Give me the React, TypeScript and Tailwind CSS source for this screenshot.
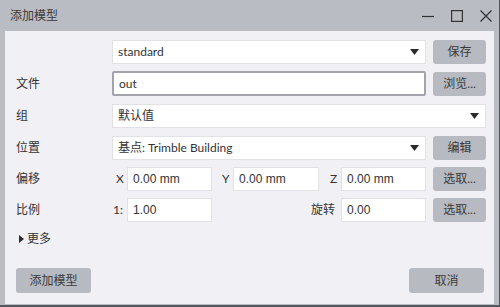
import React from "react"

const font = { fontFamily: 'Lato, "Noto Sans CJK SC", sans-serif' }
const fieldFont = { fontFamily: '"Liberation Sans", "Noto Sans CJK SC", sans-serif' }

function Arrow() {
  return (
    <svg width="9" height="6" viewBox="0 0 9 6" className="shrink-0">
      <path d="M0 0 L9 0 L4.5 6 Z" fill="#2b2b2b" />
    </svg>
  )
}

function Select({ value, className }: { value: string; className: string }) {
  return (
    <div className={`h-6 bg-white border border-[#e2e2e6] flex items-center justify-between pl-[5px] pr-[6px] ${className}`}>
      <span>{value}</span>
      <Arrow />
    </div>
  )
}

function Btn({ children, className = "w-[53px]" }: { children: React.ReactNode; className?: string }) {
  return (
    <button className={`h-6 bg-[#b8bac1] rounded-[3px] flex items-center justify-center text-[#3a3a3a] ${className}`}>
      {children}
    </button>
  )
}

function Field({ value, className }: { value: string; className: string }) {
  return (
    <div style={fieldFont} className={`h-6 bg-white border border-[#e2e2e6] flex items-center pl-[5px] ${className}`}>
      {value}
    </div>
  )
}

function Label({ children }: { children: React.ReactNode }) {
  return <div className="w-[96px] shrink-0">{children}</div>
}

export default function App() {
  return (
    <div style={font} className="w-[500px] h-[307px] bg-[#b9bcc3] border-r border-b-2 border-[#55585e] flex flex-col text-[12px] text-[#333]">
      <div className="h-[31px] shrink-0 flex items-center justify-between pl-[10px] pr-[7px]">
        <span className="text-[12px] text-[#3a3a3a]">添加模型</span>
        <div className="flex items-center gap-[17px]">
          <svg width="12" height="12" viewBox="0 0 12 12">
            <path d="M0 6.5 H12" stroke="#333" strokeWidth="1.2" />
          </svg>
          <svg width="12" height="12" viewBox="0 0 12 12">
            <rect x="0.6" y="0.6" width="10.8" height="10.8" fill="none" stroke="#333" strokeWidth="1.2" />
          </svg>
          <svg width="12" height="12" viewBox="0 0 12 12">
            <path d="M0.5 0.5 L11.5 11.5 M11.5 0.5 L0.5 11.5" stroke="#333" strokeWidth="1.2" />
          </svg>
        </div>
      </div>
      <div className="flex-1 mx-[5px] mb-[1px] bg-[#f1f0f5] pl-[11px] pr-[8px] pt-[9px] flex flex-col">
        <div className="flex flex-col gap-[7px]">
          <div className="flex items-center">
            <Label>{""}</Label>
            <Select value="standard" className="w-[315px]" />
            <Btn className="w-[53px] ml-[7px]">保存</Btn>
          </div>
          <div className="flex items-center">
            <Label>文件</Label>
            <div className="h-[25px] w-[315px] bg-white border-2 border-[#a3a4ab] rounded-[2px] flex items-center pl-[5px]">out</div>
            <Btn className="w-[53px] ml-[7px]">浏览...</Btn>
          </div>
          <div className="flex items-center mt-[1px]">
            <Label>组</Label>
            <Select value="默认值" className="w-[374px]" />
          </div>
          <div className="flex items-center mt-[1px]">
            <Label>位置</Label>
            <Select value="基点: Trimble Building" className="w-[315px]" />
            <Btn className="w-[53px] ml-[7px]">编辑</Btn>
          </div>
          <div className="flex items-center">
            <Label>偏移</Label>
            <div className="w-[15px] pl-[4px]">X</div>
            <Field value="0.00 mm" className="w-[85px]" />
            <div className="w-[21px] pl-[10px]">Y</div>
            <Field value="0.00 mm" className="w-[86px]" />
            <div className="w-[22px] pl-[11px]">Z</div>
            <Field value="0.00 mm" className="w-[85px]" />
            <Btn className="w-[53px] ml-[7px]">选取...</Btn>
          </div>
          <div className="flex items-center">
            <Label>比例</Label>
            <div className="w-[15px] pl-[1px]">1:</div>
            <Field value="1.00" className="w-[85px]" />
            <div className="w-[129px] text-right pr-[6px]">旋转</div>
            <Field value="0.00" className="w-[85px]" />
            <Btn className="w-[53px] ml-[7px]">选取...</Btn>
          </div>
        </div>
        <div className="flex items-center gap-[3px] mt-[8px] pl-[3px]">
          <svg width="5" height="8" viewBox="0 0 5 8">
            <path d="M0 0 L5 4 L0 8 Z" fill="#2b2b2b" />
          </svg>
          <span>更多</span>
        </div>
        <div className="flex justify-between mt-auto mb-[11px] pr-[2px]">
          <Btn className="w-[75px] h-[25px]">添加模型</Btn>
          <Btn className="w-[75px] h-[25px]">取消</Btn>
        </div>
      </div>
    </div>
  )
}
